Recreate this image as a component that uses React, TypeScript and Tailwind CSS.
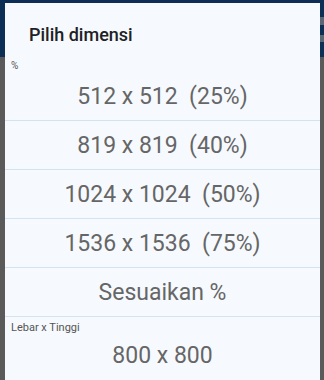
import React from "react";

const rows = ["512 x 512  (25%)", "819 x 819  (40%)", "1024 x 1024  (50%)", "1536 x 1536  (75%)", "Sesuaikan %"];

export default function App() {
  return (
    <div className="relative w-[324px] h-[380px] overflow-hidden bg-[#5a5a5a]" style={{ fontFamily: "Roboto, 'Noto Sans', sans-serif" }}>
      <div className="h-[57px] bg-[#0d2f55]" />
      <div className="absolute left-[320px] top-[17px] w-[4px] h-[8px] bg-[#5d6673]" />
      <div className="absolute left-[320px] top-[35px] w-[4px] h-[7px] bg-[#5d6673]" />
      <div className="absolute left-[5px] top-[3px] w-[315px] h-[400px] bg-[#f6fafe] flex flex-col">
        <div className="pt-[20px] pl-[24px] h-[57px] text-[18px] leading-[24px] font-medium text-[#202124]">Pilih dimensi</div>
        <div className="pl-[6px] text-[10px] leading-[12px] text-[#555]">%</div>
        {rows.map((r) => (
          <div key={r} className="h-[49px] pt-[2px] border-b border-[#d3e3ef] flex items-center justify-center text-[23px] text-[#666] whitespace-pre">
            {r}
          </div>
        ))}
        <div className="pl-[6px] pt-[5px] h-[16px] text-[11px] leading-[11px] text-[#555]">Lebar x Tinggi</div>
        <div className="h-[48px] border-b border-[#d3e3ef] flex items-center justify-center text-[23px] text-[#666] whitespace-pre">800 x 800</div>
      </div>
    </div>
  );
}
